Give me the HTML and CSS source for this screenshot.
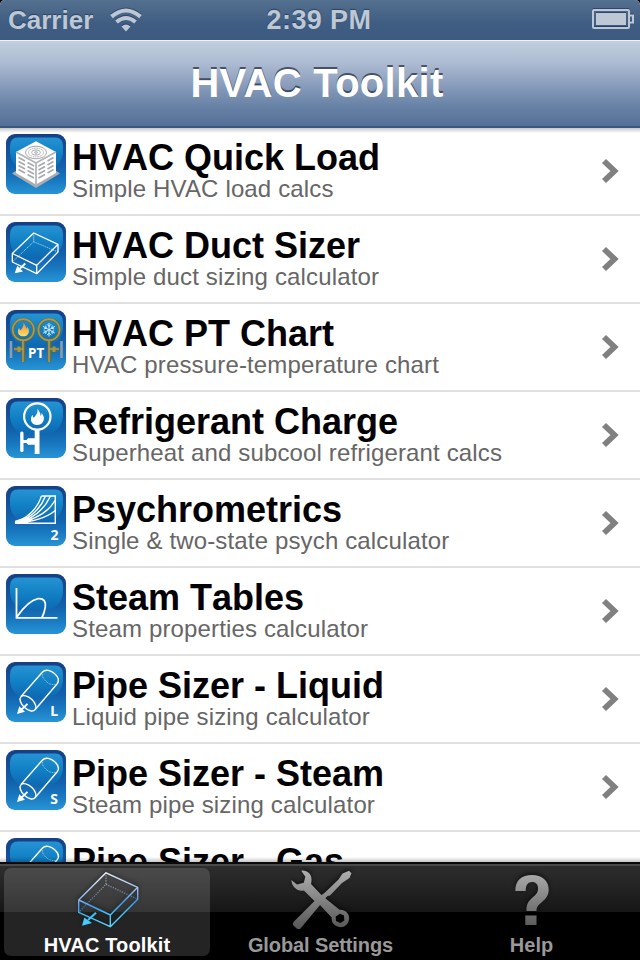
FILE: index.html
```html
<!DOCTYPE html>
<html lang="en">
<head>
    <meta charset="UTF-8">
    <meta name="viewport" content="width=device-width, initial-scale=1.0">
    <title>HVAC Toolkit</title>
    <link rel="stylesheet" href="styles.css">
</head>
<body>
    <!-- Shared icon parts -->
    <svg class="defs" width="0" height="0">
        <defs>
            <linearGradient id="tile" x1="0" y1="0" x2="0" y2="1">
                <stop offset="0" stop-color="#153f85"/>
                <stop offset="0.55" stop-color="#1262ad"/>
                <stop offset="0.75" stop-color="#1776be"/>
                <stop offset="1" stop-color="#2795d5"/>
            </linearGradient>
            <linearGradient id="gloss" x1="0" y1="0" x2="0" y2="1">
                <stop offset="0" stop-color="#2593d2"/>
                <stop offset="0.5" stop-color="#1180c4"/>
                <stop offset="1" stop-color="#0d68b2"/>
            </linearGradient>
            <linearGradient id="flame-fill" x1="0" y1="0" x2="0" y2="1">
                <stop offset="0" stop-color="#f58a1f"/>
                <stop offset="1" stop-color="#ffdf6e"/>
            </linearGradient>
            <linearGradient id="active" gradientUnits="userSpaceOnUse" x1="30" y1="4" x2="36" y2="58">
                <stop offset="0" stop-color="#f2f5ff"/>
                <stop offset="0.42" stop-color="#8fb8ec"/>
                <stop offset="0.6" stop-color="#3f9df5"/>
                <stop offset="0.75" stop-color="#3fc0fa"/>
                <stop offset="1" stop-color="#56d6ff"/>
            </linearGradient>
            <linearGradient id="metal" gradientUnits="userSpaceOnUse" x1="0" y1="2" x2="0" y2="60">
                <stop offset="0" stop-color="#b0b0b0"/>
                <stop offset="1" stop-color="#585858"/>
            </linearGradient>

            <symbol id="base" viewBox="0 0 60 60">
                <rect width="60" height="60" rx="9" fill="url(#tile)"/>
                <path d="M12 3.5H49Q57 3.5 57 12V19C56 28 50 35 41 36H19C10 35 5 28 4 19V12Q4 3.5 12 3.5Z" fill="url(#gloss)"/>
            </symbol>
            <symbol id="flame" viewBox="0 0 14 17">
                <path d="M7 0C8.500 3 10.500 4.500 10 7.500C11.200 7 11.300 5.500 11 4.500C14 8 14.500 11 12.500 14C11 16.500 9 17 7 17C3.500 17 .5 15 .3 11.500C.1 9 1.200 7.500 2 6.500C2 8 2.300 9 3.300 9.500C5.500 7 7.800 4 7 0Z"/>
            </symbol>
            <symbol id="pipe" viewBox="0 0 60 60">
                <g fill="none" stroke="#fff" stroke-width="1.4">
                    <ellipse cx="22" cy="41.300" rx="9.600" ry="5.400" transform="rotate(43 22 41.300)"/>
                    <path d="M15 34.500L36.300 10.200C39.500 6.800 45 8.200 49 12C52.500 15.200 53.500 18.800 51 22L29 47.800"/>
                    <path d="M36.300 10.200C34.800 16 43 25 51 22" stroke-width=".8" stroke-dasharray="1 .7" opacity=".7"/>
                    <path d="M21.500 41.800L15.500 47.500" stroke-width="1.800"/>
                </g>
                <path d="M11 52L13.300 44.300L19 49.800Z" fill="#fff"/>
            </symbol>
        </defs>
    </svg>

    <div class="screen">
        <header class="status-bar">
            <div class="carrier">
                Carrier
                <svg class="wifi" width="32" height="24" viewBox="0 0 32 24">
                    <g fill="none" stroke="#bec8d5" stroke-width="4">
                        <path d="M1.500 8.600Q16-3.600 30.500 8.600"/>
                        <path d="M6.500 14Q16 6 25.500 14"/>
                    </g>
                    <path d="M11.500 18.500Q16 14.300 20.500 18.500L16 23.500Z" fill="#bec8d5"/>
                </svg>
            </div>
            <div class="time">2:39 PM</div>
            <svg class="battery" width="42" height="22" viewBox="0 0 42 22">
                <rect x="1" y="2" width="36" height="18" rx="1" fill="none" stroke="#bec8d5" stroke-width="2"/>
                <rect x="4" y="5" width="30" height="12" fill="#bec8d5"/>
                <path d="M38 7.500H41V14.500H38" fill="none" stroke="#bec8d5" stroke-width="2"/>
            </svg>
        </header>

        <div class="nav-bar">
            <h1>HVAC Toolkit</h1>
        </div>

        <ul class="tool-list">
            <li class="tool">
                <svg class="tool-icon" viewBox="0 0 60 60">
                    <use href="#base"/>
                    <path d="M6 39.500L12 35.500H48L54 39.500L30 54Z" fill="#a9adb2"/>
                    <path d="M10 18L30 7.300L50 18V39L30 50.500L10 39Z" fill="#fff"/>
                    <path d="M10 18L30 29L50 18M30 29V50.500" fill="none" stroke="#b3b5b8" stroke-width="1.800"/>
                    <g fill="none" stroke="#a5a8ac" stroke-width="1">
                        <ellipse cx="30" cy="18.500" rx="10.500" ry="6.300"/>
                        <ellipse cx="30" cy="18.500" rx="7.500" ry="4.400" stroke-dasharray="1.500 .7"/>
                        <ellipse cx="30" cy="18.500" rx="4.300" ry="2.500"/>
                        <ellipse cx="30" cy="18.500" rx="1.500" ry=".8"/>
                    </g>
                    <g fill="none" stroke="#a6aaae" stroke-width="1.700">
                        <path d="M12.500 23.500L19 27M12.500 27.500L19 31M12.500 31.500L19 35M12.500 35.500L19 39"/>
                        <path d="M21.500 28.500L28 32M21.500 32.500L28 36M21.500 36.500L28 40M21.500 40.500L28 44"/>
                        <path d="M32.500 32L39 28.500M32.500 36L39 32.500M32.500 40L39 36.500M32.500 44L39 40.500"/>
                        <path d="M41.500 27L47.500 23.500M41.500 31L47.500 27.500M41.500 35L47.500 31.500M41.500 39L47.500 35.500"/>
                    </g>
                </svg>
                <div class="tool-text">
                    <h2>HVAC Quick Load</h2>
                    <p>Simple HVAC load calcs</p>
                </div>
                <svg class="chevron" viewBox="0 0 20 26"><path d="M4 3L14.500 13L4 23"/></svg>
            </li>
            <li class="tool">
                <svg class="tool-icon" viewBox="0 0 60 60">
                    <use href="#base"/>
                    <g fill="none" stroke="#fff" stroke-width="1.300" stroke-linejoin="round">
                        <path d="M27.700 11L52 22.300L30.700 43.300L6.300 31.500ZM6.300 31.500V40L30.700 51.700L52 30V22.300M30.700 43.300V51.700"/>
                        <path d="M27.700 11V19.700L6.300 40M27.700 19.700L52 30" stroke-width=".9" stroke-dasharray="1.200 .9" opacity=".75"/>
                        <path d="M19.300 41.500L14 46.500" stroke-width="1.900"/>
                    </g>
                    <path d="M8.700 51.300L11.300 43.800L17 49.500Z" fill="#fff"/>
                </svg>
                <div class="tool-text">
                    <h2>HVAC Duct Sizer</h2>
                    <p>Simple duct sizing calculator</p>
                </div>
                <svg class="chevron" viewBox="0 0 20 26"><path d="M4 3L14.500 13L4 23"/></svg>
            </li>
            <li class="tool">
                <svg class="tool-icon" viewBox="0 0 60 60">
                    <use href="#base"/>
                    <g fill="none" stroke="#766b2c" stroke-width="3.800">
                        <path d="M17.300 31V52M43.300 31V52M8 39.300H18M43 39.300H53"/>
                        <circle cx="17.300" cy="19.700" r="10.500" stroke-width="3"/>
                        <circle cx="43" cy="19.700" r="10.500" stroke-width="3"/>
                    </g>
                    <g fill="none" stroke="#a89b55" stroke-width="1.600">
                        <path d="M17 31V52M43 31V52M8 39H18M43 39H53"/>
                        <circle cx="17.300" cy="19.700" r="10.600"/>
                        <circle cx="43" cy="19.700" r="10.600"/>
                    </g>
                    <path d="M13 36.500V42M48 36.500V42" stroke="#a59748" stroke-width="3"/>
                    <path d="M5 31V48M55.500 31V48" stroke="#8b9cad" stroke-width="2.600"/>
                    <use href="#flame" x="11.500" y="12.500" width="12" height="14" fill="url(#flame-fill)"/>
                    <path d="M43 13V26.500M37.200 16.400L48.800 23.100M37.200 23.100L48.800 16.400M41 14.300L43 16.300L45 14.300M41 25.200L43 23.200L45 25.200M37.800 19L40.200 18.300L39.700 15.700M48.200 19L45.800 18.300L46.300 15.700M37.800 20.800L40.200 21.400L39.700 24M48.200 20.800L45.800 21.400L46.300 24" fill="none" stroke="#d8efff" stroke-width="1"/>
                    <text class="icon-label" x="30.200" y="48" font-size="13.500" text-anchor="middle">PT</text>
                </svg>
                <div class="tool-text">
                    <h2>HVAC PT Chart</h2>
                    <p>HVAC pressure-temperature chart</p>
                </div>
                <svg class="chevron" viewBox="0 0 20 26"><path d="M4 3L14.500 13L4 23"/></svg>
            </li>
            <li class="tool">
                <svg class="tool-icon" viewBox="0 0 60 60">
                    <use href="#base"/>
                    <circle cx="31.300" cy="18.500" r="13.200" fill="none" stroke="#fff" stroke-width="2.200"/>
                    <g fill="#fff">
                        <use href="#flame" x="24.500" y="10.500" width="14" height="16.500"/>
                        <rect x="28.700" y="31.500" width="4.800" height="24.500"/>
                        <rect x="14.200" y="33.500" width="3.300" height="20.500" rx="1.500"/>
                        <path d="M17 42H20.500L22 40.300H29V46.700H22L20.500 45H17Z"/>
                    </g>
                </svg>
                <div class="tool-text">
                    <h2>Refrigerant Charge</h2>
                    <p>Superheat and subcool refrigerant calcs</p>
                </div>
                <svg class="chevron" viewBox="0 0 20 26"><path d="M4 3L14.500 13L4 23"/></svg>
            </li>
            <li class="tool">
                <svg class="tool-icon" viewBox="0 0 60 60">
                    <use href="#base"/>
                    <g fill="none" stroke="#fff" stroke-width="1.400">
                        <path d="M9 37.300H49.300V10H35.500"/>
                        <path d="M9 36.700C21 32 31 24 35.500 10"/>
                        <path d="M9 36.900C23 33 34 24 39.500 10"/>
                        <path d="M9 37C25 34 37 26 44.500 10"/>
                        <path d="M9 37.100C28 34.500 41 28 49 14.500"/>
                        <path d="M9 37.200C28 36 40 32 49.300 24.500"/>
                    </g>
                    <path d="M9 34.800L20 31L27 33.500L20 38H9Z" fill="#fff"/>
                    <text class="icon-label" x="48.500" y="54" font-size="14" text-anchor="middle">2</text>
                </svg>
                <div class="tool-text">
                    <h2>Psychrometrics</h2>
                    <p>Single &amp; two-state psych calculator</p>
                </div>
                <svg class="chevron" viewBox="0 0 20 26"><path d="M4 3L14.500 13L4 23"/></svg>
            </li>
            <li class="tool">
                <svg class="tool-icon" viewBox="0 0 60 60">
                    <use href="#base"/>
                    <path d="M10.500 14V43.800H51.500M10.800 43C15 37 23 26.500 32 24.700C38 23.800 40 28 39.300 33Q38.500 38.500 36 43.500" fill="none" stroke="#fff" stroke-width="1.800"/>
                </svg>
                <div class="tool-text">
                    <h2>Steam Tables</h2>
                    <p>Steam properties calculator</p>
                </div>
                <svg class="chevron" viewBox="0 0 20 26"><path d="M4 3L14.500 13L4 23"/></svg>
            </li>
            <li class="tool">
                <svg class="tool-icon" viewBox="0 0 60 60">
                    <use href="#base"/>
                    <use href="#pipe"/>
                    <text class="icon-label" x="48.200" y="54" font-size="14" text-anchor="middle">L</text>
                </svg>
                <div class="tool-text">
                    <h2>Pipe Sizer - Liquid</h2>
                    <p>Liquid pipe sizing calculator</p>
                </div>
                <svg class="chevron" viewBox="0 0 20 26"><path d="M4 3L14.500 13L4 23"/></svg>
            </li>
            <li class="tool">
                <svg class="tool-icon" viewBox="0 0 60 60">
                    <use href="#base"/>
                    <use href="#pipe"/>
                    <text class="icon-label" x="48.200" y="54" font-size="14" text-anchor="middle">S</text>
                </svg>
                <div class="tool-text">
                    <h2>Pipe Sizer - Steam</h2>
                    <p>Steam pipe sizing calculator</p>
                </div>
                <svg class="chevron" viewBox="0 0 20 26"><path d="M4 3L14.500 13L4 23"/></svg>
            </li>
            <li class="tool">
                <svg class="tool-icon" viewBox="0 0 60 60">
                    <use href="#base"/>
                    <use href="#pipe"/>
                </svg>
                <div class="tool-text">
                    <h2>Pipe Sizer - Gas</h2>
                </div>
            </li>
        </ul>

        <nav class="tab-bar">
            <a class="tab active" href="#">
                <svg class="tab-icon" viewBox="0 0 64 64">
                    <g fill="none" stroke="url(#active)" stroke-width="1.400" stroke-linejoin="round">
                        <path d="M31 4.800L62.700 19.300L35.300 47L3.700 32ZM3.700 32V44.300L35.300 58.700L62.700 31.300V19.300M35.300 47V58.700"/>
                        <path d="M31 4.800V16.300L3.700 44.300M31 16.300L62.700 31.300" stroke-width="1.200" stroke-dasharray="1.300 1.200" opacity=".6"/>
                        <path d="M21 44.700L13 52" stroke="#3fc3fb" stroke-width="2"/>
                    </g>
                    <path d="M7 57.800L9.300 49.500L17 55Z" fill="#46cbff"/>
                </svg>
                <span>HVAC Toolkit</span>
            </a>
            <a class="tab settings" href="#">
                <svg class="tab-icon" viewBox="0 0 64 64">
                    <g fill="url(#metal)">
                        <path d="M12.300 2.700C18 1.800 23 6 22.500 12.500Q22.300 15 22 16L31.500 26L36 30L50.500 41.700A8.800 8.800 0 1 1 42.600 49.600L31 37L11.500 60.500Q9 62 6.500 59.500L4.500 57.500Q3 55.500 5 53.500L25.500 33L14.800 22.500C9 24 3 19.500 2.300 12L8 16.500L14.800 14.800L16.300 8.800ZM51 45.800L46.700 48.500L47 53L51.300 55L55.300 52.500L55 47.500Z" fill-rule="evenodd"/>
                        <path d="M60 2.700L62.500 5.300L60.500 10L53 15L41 27.500L38.500 28L35.500 31.500L32 27.500L36 24.500L49.500 11.500L53.500 5.500Z"/>
                    </g>
                </svg>
                <span>Global Settings</span>
            </a>
            <a class="tab" href="#">
                <svg class="tab-icon" viewBox="0 0 64 64">
                    <path d="M15.300 23C15.300 12.500 21.500 7 32 7C42 7 48.700 12.500 48.700 21.500C48.700 27 46.500 30 42 34C38 37.500 36.500 39 36.500 43H26.500C26.300 36.500 28 33.500 32.500 29.500C36 26.500 38 24.800 38 20.500C38 16.500 36 14 32 14C28 14 25.700 17 25.700 23ZM25.300 47.500H36.500V57H25.300Z" fill="url(#metal)"/>
                </svg>
                <span>Help</span>
            </a>
        </nav>
    </div>
</body>
</html>
```
FILE: styles.css
```css
* {
    margin: 0;
    padding: 0;
    box-sizing: border-box;
    font-family: 'Liberation Sans', Arial, sans-serif;
}

body {
    background: #000;
}

.defs {
    position: absolute;
}

.screen {
    width: 640px;
    height: 960px;
    display: flex;
    flex-direction: column;
    overflow: hidden;
    border-radius: 5px 5px 0 0;
    background: white;
}

/* Status bar */
.status-bar {
    height: 40px;
    flex-shrink: 0;
    display: grid;
    grid-template-columns: 1fr auto 1fr;
    align-items: center;
    padding: 0 6px 0 8px;
    background: linear-gradient(#54708f, #3f5d83 60%, #3d5a80);
    color: #bec8d5;
    font-size: 26px;
    font-weight: bold;
    line-height: 40px;
    text-shadow: 0 -1px 1px rgba(20, 40, 70, 0.6);
}

.carrier {
    display: flex;
    align-items: center;
    gap: 17px;
}

.time {
    font-size: 27px;
    letter-spacing: 0.4px;
    padding-right: 4px;
}

.battery {
    justify-self: end;
    margin-top: -2px;
}

.wifi,
.battery {
    filter: drop-shadow(0 -1px 0 rgba(20, 40, 70, 0.5));
}

/* Navigation bar */
.nav-bar {
    height: 88px;
    flex-shrink: 0;
    background: linear-gradient(#c1cfdf, #aebcd3 25%, #8599b9 55%, #6681a5 78%, #566f97);
    border-top: 1px solid #f0f4f8;
    border-bottom: 2px solid #385680;
    text-align: center;
}

.nav-bar h1 {
    color: white;
    font-size: 40px;
    line-height: 84px;
    letter-spacing: 0.3px;
    text-shadow: 0 -2px 0 rgba(40, 50, 70, 0.75);
    padding-right: 6px;
}

/* List of calculators */
.tool-list {
    height: 734px;
    flex-shrink: 0;
    overflow: hidden;
    list-style: none;
    background: white;
    position: relative;
}

.tool-list::before,
.tool-list::after {
    content: '';
    position: absolute;
    left: 0;
    right: 0;
    top: 0;
    height: 5px;
    background: linear-gradient(rgba(0, 0, 0, 0.22), rgba(0, 0, 0, 0));
}

.tool-list::after {
    top: auto;
    bottom: 0;
    background: linear-gradient(rgba(0, 0, 0, 0), rgba(0, 0, 0, 0.22));
}

.tool {
    height: 88px;
    display: flex;
    align-items: flex-start;
    gap: 6px;
    padding: 6px 20px 0 6px;
    border-bottom: 2px solid #e0e0e0;
}

.tool-icon {
    width: 60px;
    height: 60px;
    flex-shrink: 0;
}

.icon-label {
    fill: white;
    font-family: 'Noto Sans', 'DejaVu Sans', sans-serif;
    font-weight: bold;
}

.tool-text {
    flex: 1;
    padding-top: 6px;
    white-space: nowrap;
}

.tool-text h2 {
    color: black;
    font-size: 36px;
    line-height: 36px;
    font-kerning: none;
}

.tool-text p {
    color: #666;
    font-size: 24px;
    line-height: 25px;
    letter-spacing: 0.15px;
}

.chevron {
    width: 20px;
    height: 26px;
    margin-top: 24px;
    fill: none;
    stroke: #808080;
    stroke-width: 5.8;
}

/* Tab bar */
.tab-bar {
    height: 98px;
    flex-shrink: 0;
    display: grid;
    grid-template-columns: 210px 213px 1fr;
    padding: 2px 4px 4px 4px;
    border-top: 2px solid #0a0a0a;
    background: linear-gradient(#4a4a4a 0, #4a4a4a 2px, #2e2e2e 2px, #161616 48px, #000 48px);
}

.tab {
    display: flex;
    flex-direction: column;
    align-items: center;
    color: #999;
    text-decoration: none;
    font-size: 20px;
    font-weight: bold;
    line-height: 22px;
}

.tab.active {
    margin: 2px 4px 1px 0;
    border-radius: 7px;
    background: rgba(255, 255, 255, 0.14);
    color: white;
    letter-spacing: 0.15px;
}

.tab.settings {
    letter-spacing: -0.1px;
}

.tab-icon {
    width: 64px;
    height: 64px;
    margin-top: 2px;
    filter: drop-shadow(0 -2px 2px rgba(0, 0, 0, 0.5));
}

.tab.active .tab-icon {
    margin-top: 0;
}

.tab span {
    margin-top: 2px;
}
```
